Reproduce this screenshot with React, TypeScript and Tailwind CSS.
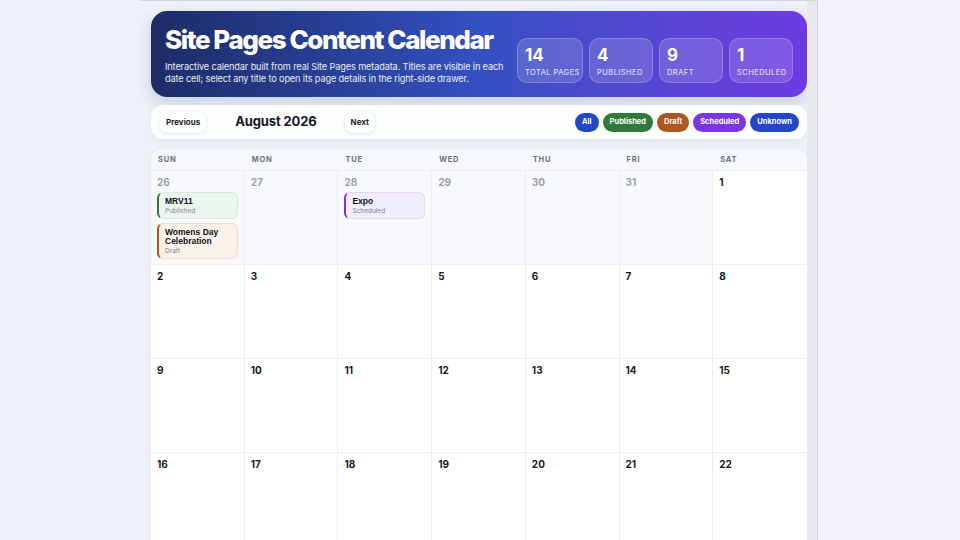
import React from 'react';

const STATS = [
  { value: '14', label: 'Total Pages', w: 'w-[66px]' },
  { value: '4', label: 'Published', w: 'w-[64px]' },
  { value: '9', label: 'Draft', w: 'w-[64px]' },
  { value: '1', label: 'Scheduled', w: 'w-[64px]' },
];

const FILTERS = [
  { label: 'All', cls: 'bg-[#2347c6]' },
  { label: 'Published', cls: 'bg-[#2f7a3b]' },
  { label: 'Draft', cls: 'bg-[#ad561f]' },
  { label: 'Scheduled', cls: 'bg-[#7a36e0]' },
  { label: 'Unknown', cls: 'bg-[#2347c6]' },
];

const DAYS = ['Sun', 'Mon', 'Tue', 'Wed', 'Thu', 'Fri', 'Sat'];

type Ev = { title: string; status: string; tone: 'green' | 'orange' | 'purple' };

const EVENTS: Record<string, Ev[]> = {
  p26: [
    { title: 'MRV11', status: 'Published', tone: 'green' },
    { title: 'Womens Day Celebration', status: 'Draft', tone: 'orange' },
  ],
  p28: [{ title: 'Expo', status: 'Scheduled', tone: 'purple' }],
};

const TONES = {
  green: 'bg-[#edf5ef] border-[#d9e8dc] border-l-[#2f7a3b]',
  orange: 'bg-[#fbf1e8] border-[#f0dfd0] border-l-[#ad561f]',
  purple: 'bg-[#f2edfd] border-[#e2d8f6] border-l-[#7a36e0]',
};

const WEEKS: { day: number; prev: boolean }[][] = [
  [26, 27, 28, 29, 30, 31].map((d) => ({ day: d, prev: true })).concat([{ day: 1, prev: false }]),
  [2, 3, 4, 5, 6, 7, 8].map((d) => ({ day: d, prev: false })),
  [9, 10, 11, 12, 13, 14, 15].map((d) => ({ day: d, prev: false })),
  [16, 17, 18, 19, 20, 21, 22].map((d) => ({ day: d, prev: false })),
];

export default function App() {
  return (
    <div className="w-[960px] h-[540px] overflow-hidden flex bg-[#eef1f8]" style={{ fontFamily: 'Inter, "Noto Sans", sans-serif' }}>
      <div className="w-[140px] shrink-0" />

      {/* scroll area */}
      <div className="w-[677px] shrink-0 flex border-t border-[#d4d7df]">
        <div className="w-[667px] pl-[11px] pt-[10px] flex flex-col">
          {/* Header */}
          <div className="h-[86px] rounded-[16px] bg-gradient-to-r from-[#1c2c66] via-[#3450c2] to-[#6d3ae2] flex justify-between pl-[14px] pr-[14px] shadow-[0_6px_16px_rgba(40,50,120,0.18)]">
            <div className="text-white pt-[14px]">
              <h1 className="text-[26px] leading-[30px] font-extrabold tracking-[-0.055em]">Site Pages Content Calendar</h1>
              <p className="mt-[6px] text-[9.2px] leading-[12px] tracking-[-0.015em] text-white/90 w-[345px]">
                Interactive calendar built from real Site Pages metadata. Titles are visible in each date cell; select any title to open its page details in the right-side drawer.
              </p>
            </div>
            <div className="flex gap-[6px] self-end pb-[14px]">
              {STATS.map((s) => (
                <div key={s.label} className={`${s.w} h-[45px] rounded-[10px] bg-white/15 border border-white/20 px-[7px] pt-[7px] text-white`}>
                  <div className="text-[17px] leading-[19px] font-bold">{s.value}</div>
                  <div className="mt-[3px] text-[7.5px] leading-[9px] uppercase tracking-[0.06em] text-white/85 whitespace-nowrap">{s.label}</div>
                </div>
              ))}
            </div>
          </div>

          {/* Toolbar */}
          <div className="mt-[8px] h-[34px] rounded-[12px] bg-white/90 flex items-center justify-between pl-[9px] pr-[8px] shadow-[0_2px_8px_rgba(30,40,90,0.05)]">
            <div className="flex items-center">
              <button className="h-[21px] px-[6px] rounded-[8px] bg-white text-[8px] font-bold text-[#1a1d29] shadow-[0_1px_4px_rgba(30,40,90,0.12)]">Previous</button>
              <span className="ml-[29px] text-[13px] font-bold text-[#151826] tracking-[-0.01em]">August 2026</span>
              <button className="ml-[28px] h-[21px] px-[6px] rounded-[8px] bg-white text-[8px] font-bold text-[#1a1d29] shadow-[0_1px_4px_rgba(30,40,90,0.12)]">Next</button>
            </div>
            <div className="flex gap-[4px]">
              {FILTERS.map((f) => (
                <span key={f.label} className={`${f.cls} h-[19px] px-[7px] rounded-full text-white text-[7.5px] font-bold flex items-center`}>{f.label}</span>
              ))}
            </div>
          </div>

          {/* Calendar */}
          <div className="mt-[10px] rounded-t-[12px] bg-white overflow-hidden shadow-[0_2px_8px_rgba(30,40,90,0.05)] flex-1">
            <div className="grid grid-cols-7 h-[22px] bg-[#f7f8fb] border-b border-[#eceef3]">
              {DAYS.map((d) => (
                <div key={d} className="flex items-center pl-[7px] text-[7.5px] font-bold uppercase tracking-[0.1em] text-[#6b7080]">{d}</div>
              ))}
            </div>
            {WEEKS.map((w, wi) => (
              <div key={wi} className="grid grid-cols-7 h-[94px] border-b border-[#eceef3]">
                {w.map((c, ci) => {
                  const evs = c.prev ? EVENTS['p' + c.day] : undefined;
                  return (
                    <div key={ci} className={`${ci < 6 ? 'border-r border-[#eceef3]' : ''} ${c.prev ? 'bg-[#f8f9fc]' : 'bg-white'} px-[6px] pt-[5px]`}>
                      <div className={`text-[10px] leading-[12px] font-bold ${c.prev ? 'text-[#9a9fad]' : 'text-[#15171f]'}`}>{c.day}</div>
                      {evs && (
                        <div className="mt-[4px] flex flex-col gap-[4px]">
                          {evs.map((e) => (
                            <div key={e.title} className={`${TONES[e.tone]} border border-l-2 rounded-[6px] pl-[6px] pr-[4px] pt-[4px] pb-[3px]`}>
                              <div className="text-[8.5px] leading-[9px] font-bold text-[#111319]" style={{ fontFamily: '"Liberation Sans", Arial, sans-serif' }}>{e.title}</div>
                              <div className="mt-[1px] text-[6.5px] leading-[8px] text-[#80848f]">{e.status}</div>
                            </div>
                          ))}
                        </div>
                      )}
                    </div>
                  );
                })}
              </div>
            ))}
          </div>
        </div>
        {/* scrollbar track */}
        <div className="w-[10px] bg-[#e7e9ee]" />
      </div>

      <div className="w-[1px] shrink-0 bg-[#d2d5dd]" />
      <div className="flex-1 bg-[#f1f3f9]" />
    </div>
  );
}
